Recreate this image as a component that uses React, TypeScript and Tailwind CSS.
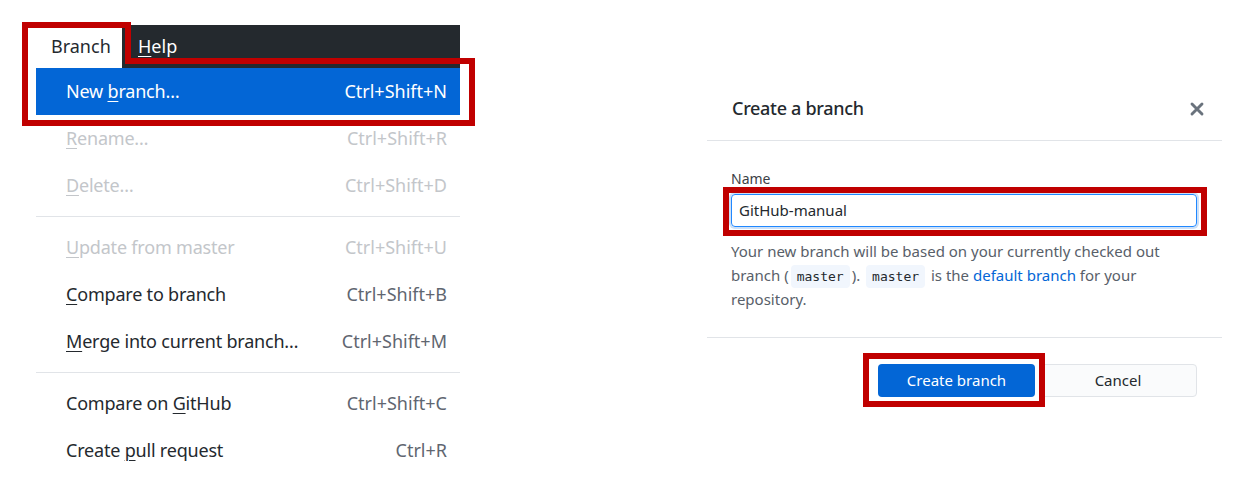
import React from "react";

const font = { fontFamily: '"Noto Sans", "Segoe UI", sans-serif' };

type Item = {
  pre: string;
  key: string;
  post: string;
  shortcut: string;
  disabled?: boolean;
  active?: boolean;
};

const groups: Item[][] = [
  [
    { pre: "New ", key: "b", post: "ranch…", shortcut: "Ctrl+Shift+N", active: true },
    { pre: "", key: "R", post: "ename…", shortcut: "Ctrl+Shift+R", disabled: true },
    { pre: "", key: "D", post: "elete…", shortcut: "Ctrl+Shift+D", disabled: true },
  ],
  [
    { pre: "", key: "U", post: "pdate from master", shortcut: "Ctrl+Shift+U", disabled: true },
    { pre: "", key: "C", post: "ompare to branch", shortcut: "Ctrl+Shift+B" },
    { pre: "", key: "M", post: "erge into current branch…", shortcut: "Ctrl+Shift+M" },
  ],
  [
    { pre: "Compare on ", key: "G", post: "itHub", shortcut: "Ctrl+Shift+C" },
    { pre: "Create ", key: "p", post: "ull request", shortcut: "Ctrl+R" },
  ],
];

function MenuRow({ item }: { item: Item }) {
  const label = item.active
    ? "text-white"
    : item.disabled
      ? "text-[#c3c6ca]"
      : "text-[#24292e]";
  const sc = item.active
    ? "text-white"
    : item.disabled
      ? "text-[#c3c6ca]"
      : "text-[#5f6670]";
  return (
    <div
      className={`h-[47px] flex items-center justify-between pl-[30px] pr-[13px] text-[18px] ${
        item.active ? "bg-[#0366d6]" : ""
      }`}
    >
      <span className={`${label} tracking-[-0.2px]`}>
        {item.pre}
        <span className="underline underline-offset-[3px] decoration-1">{item.key}</span>
        {item.post}
      </span>
      <span className={sc}>{item.shortcut}</span>
    </div>
  );
}

function Code({ children }: { children: React.ReactNode }) {
  return (
    <code
      className="mx-[2px] px-[6px] py-[4px] rounded-[4px] bg-[#f1f6fd] text-[13px] text-[#24292e]"
      style={{ fontFamily: '"DejaVu Sans Mono", "Liberation Mono", monospace' }}
    >
      {children}
    </code>
  );
}

export default function App() {
  return (
    <div className="relative w-[1253px] h-[490px] bg-white flex" style={font}>
      {/* menu */}
      <div className="ml-[36px] mt-[25px] w-[424px]">
        <div className="flex h-[43px] text-[18px]">
          <div className="w-[86px] bg-white pl-[15px] flex items-center text-[#24292e]">Branch</div>
          <div className="flex-1 bg-[#24292e] pl-[16px] flex items-center text-white">
            <span>
              <span className="underline underline-offset-[3px] decoration-1">H</span>elp
            </span>
          </div>
        </div>
        {groups.map((g, gi) => (
          <div key={gi}>
            {gi > 0 && (
              <div className="py-[7px]">
                <div className="h-px bg-[#e1e4e8]" />
              </div>
            )}
            {g.map((item, i) => (
              <MenuRow key={i} item={item} />
            ))}
          </div>
        ))}
      </div>

      {/* dialog */}
      <div className="ml-[247px] mt-[77px] w-[515px] h-[360px] flex flex-col">
        <div className="h-[64px] border-b border-[#e1e4e8] flex items-center justify-between pl-[25px] pr-[15px]">
          <span className="text-[18px] font-medium tracking-[-0.3px] text-[#24292e]">Create a branch</span>
          <svg width="20" height="20" viewBox="0 0 16 16" fill="none">
            <path d="M4 4 L12 12 M12 4 L4 12" stroke="#6a737d" strokeWidth="2.3" strokeLinecap="round" />
          </svg>
        </div>
        <div className="pl-[24px] pr-[25px] pt-[28px] pb-[25px] border-b border-[#e1e4e8]">
          <div className="text-[14px] leading-[20px] text-[#3b4046] mb-[5px]">Name</div>
          <div className="relative">
            <div className="h-[33px] rounded-[4px] border border-[#2188ff] shadow-[0_0_0_2px_rgba(3,102,214,0.2)] flex items-center pl-[7px] text-[15px] text-[#24292e]">
              GitHub-manual
            </div>
            <div className="pointer-events-none absolute left-[-8px] right-[-10px] top-[-7px] bottom-[-9px] border-[6px] border-[#c00000]" />
          </div>
          <p className="mt-[13px] text-[15px] leading-[23.5px] text-[#586069]">
            Your new branch will be based on your currently checked out branch (<Code>master</Code>).{" "}
            <Code>master</Code> is the <span className="text-[#0366d6]">default branch</span> for your
            repository.
          </p>
        </div>
        <div className="flex justify-end gap-[4px] pt-[26px] pr-[25px]">
          <div className="relative">
            <div className="w-[157px] h-[33px] rounded-[4px] bg-[#0366d6] text-white text-[15px] flex items-center justify-center">
              Create branch
            </div>
            <div className="pointer-events-none absolute left-[-15px] right-[-10px] top-[-11px] bottom-[-10px] border-[6px] border-[#c00000]" />
          </div>
          <div className="w-[158px] h-[33px] rounded-[4px] bg-[#fafbfc] border border-[#e1e4e8] text-[#24292e] text-[15px] flex items-center justify-center">
            Cancel
          </div>
        </div>
      </div>

      {/* annotation around menu */}
      <svg className="pointer-events-none absolute left-0 top-0" width="480" height="130">
        <path d="M25 25 H128 V61 H472 V123 H25 Z" fill="none" stroke="#c00000" strokeWidth="6" />
      </svg>
    </div>
  );
}
